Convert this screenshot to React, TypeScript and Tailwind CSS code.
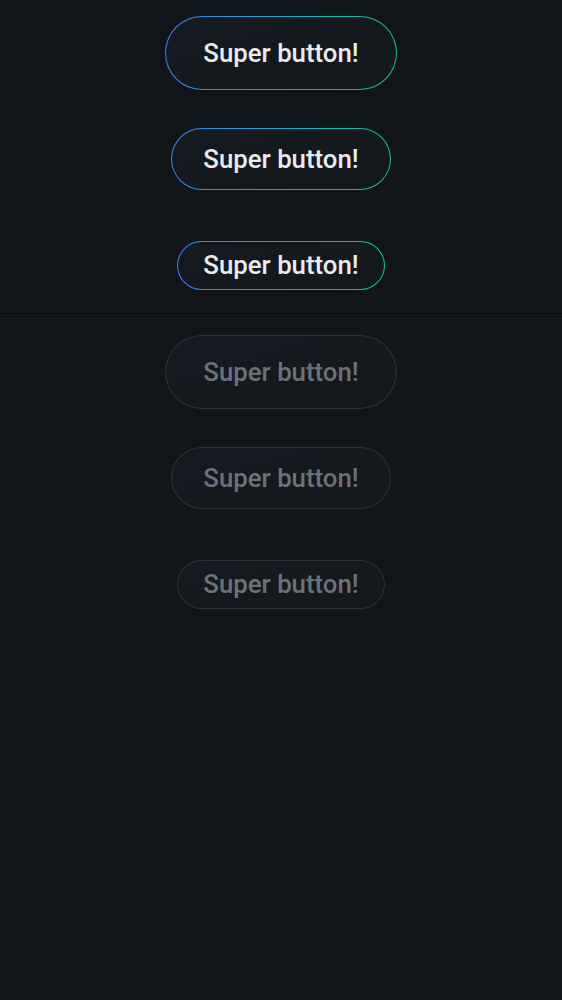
import React from "react";

type Size = "lg" | "md" | "sm";

const sizeCls: Record<Size, string> = {
  lg: "h-[72px] px-[37px]",
  md: "h-[60px] px-[31px]",
  sm: "h-[47px] px-[25px]",
};

function Label({ disabled }: { disabled?: boolean }) {
  return (
    <span
      className={`text-[25.8px] font-medium leading-none translate-y-[1px] ${disabled ? "text-[#6b7079]" : "text-[#e9ebee]"}`}
      style={{ fontFamily: "Roboto, 'Noto Sans', sans-serif" }}
    >
      Super button!
    </span>
  );
}

function SuperButton({ size, disabled }: { size: Size; disabled?: boolean }) {
  return (
    <div
      className={
        disabled
          ? "rounded-full p-px bg-[#2c3136]"
          : "rounded-full p-px bg-gradient-to-r from-[#3b82f6] via-[#14a8c4] to-[#10c48e]"
      }
    >
      <div
        className={`rounded-full flex items-center justify-center bg-gradient-to-br from-[#141a21] to-[#12181a] ${sizeCls[size]}`}
      >
        <Label disabled={disabled} />
      </div>
    </div>
  );
}

export default function App() {
  const sizes: Size[] = ["lg", "md", "sm"];
  return (
    <div className="min-h-[1000px] w-full bg-[#111418]">
      <div className="flex flex-col">
        {sizes.map((s) => (
          <div key={s} className="h-[106px] flex items-center justify-center">
            <SuperButton size={s} />
          </div>
        ))}
      </div>
      <div className="border-t border-[#1c2025] flex flex-col">
        {sizes.map((s) => (
          <div key={s} className="h-[106px] flex items-center justify-center">
            <SuperButton size={s} disabled />
          </div>
        ))}
      </div>
    </div>
  );
}
